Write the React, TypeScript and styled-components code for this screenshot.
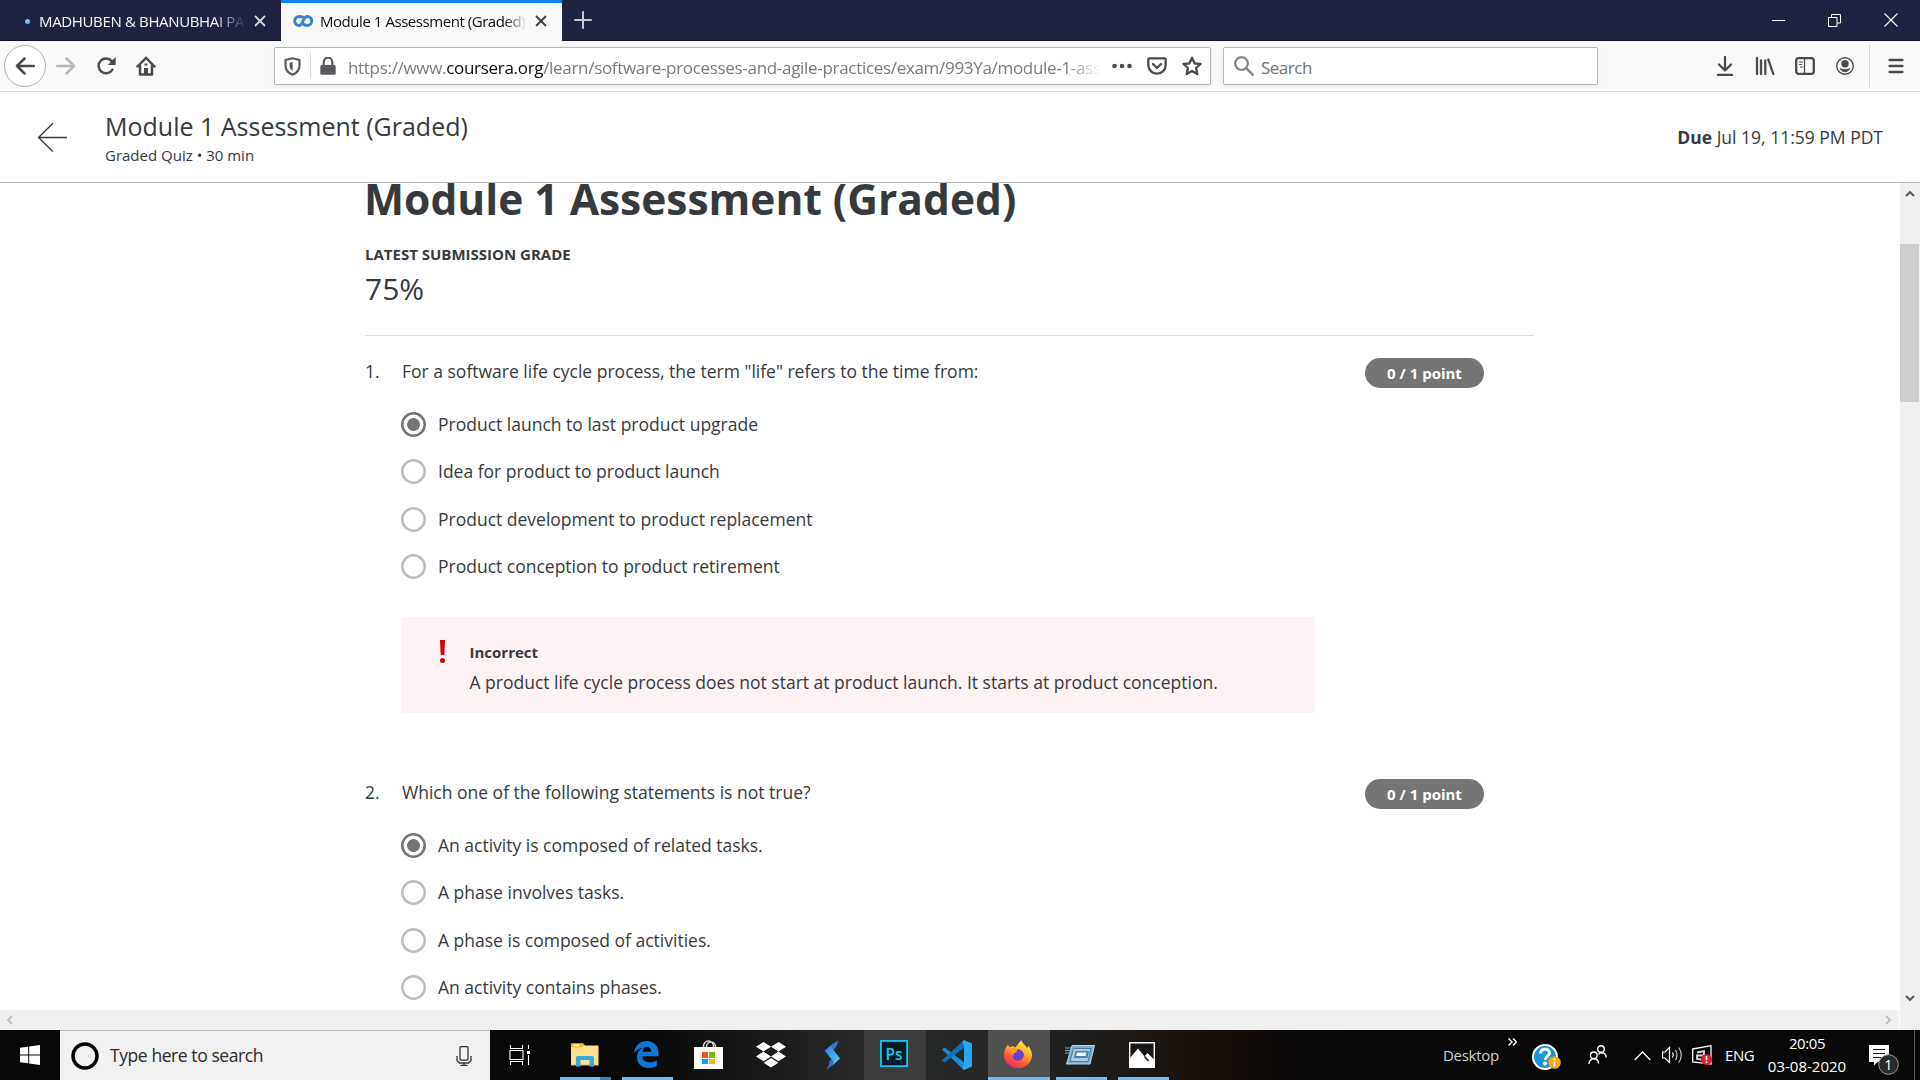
import React from "react";
import styled, { createGlobalStyle } from "styled-components";

const Global = createGlobalStyle`
  *{box-sizing:border-box}
  body{margin:0;background:#fff;overflow:hidden}
  svg{display:block;flex:none}
`;

const Screen = styled.div`
  width:1920px;height:1080px;display:flex;flex-direction:column;overflow:hidden;
  font-family:"Open Sans","Noto Sans",sans-serif;color:#373a3c;background:#fff;
`;
const Txt = styled.span<{ $size?: number; $ls?: number; $bold?: boolean; $color?: string }>`
  font-size:${p => p.$size ?? 17.5}px;letter-spacing:${p => p.$ls ?? 0}px;
  font-weight:${p => (p.$bold ? 700 : 400)};color:${p => p.$color ?? "inherit"};white-space:nowrap;
`;

/* ---------- browser chrome ---------- */
const TabBar = styled.div`height:41px;flex:none;display:flex;background:#202340;border-bottom:1px solid #12142b;`;
const Tab = styled.div<{ $active?: boolean }>`
  width:281px;height:41px;flex:none;display:flex;align-items:center;
  padding:1px 15px 0 ${p => (p.$active ? 12 : 25)}px;
  background:${p => (p.$active ? "#f9f9fa" : "transparent")};
  color:${p => (p.$active ? "#0c0c0d" : "#f9f9fa")};
  box-shadow:${p => (p.$active ? "inset 0 3px 0 #0a84ff" : "none")};
`;
const Loading = styled.i`width:5px;height:5px;border-radius:50%;background:#75bfff;margin-right:9px;flex:none;`;
const CourseraMark = styled.svg`margin-right:7px;`;
const TabLabel = styled.div<{ $w: number; $fade: number }>`
  width:${p => p.$w}px;margin-right:8px;flex:none;padding-bottom:1px;
  mask-image:linear-gradient(to left,transparent,#000 ${p => p.$fade}px);
`;
const NewTab = styled.div`width:42px;display:flex;align-items:center;justify-content:center;`;
const WinButtons = styled.div`margin-left:auto;display:flex;align-items:center;gap:43px;padding-right:22px;`;

const Toolbar = styled.div`
  height:51px;flex:none;display:flex;align-items:center;background:#f9f9fa;border-bottom:1px solid #dadada;padding-left:4px;
`;
const BackButton = styled.div`
  width:42px;height:42px;border-radius:50%;border:1px solid #b1b1b3;background:#fff;display:flex;align-items:center;justify-content:center;
`;
const NavIcons = styled.div`display:flex;align-items:center;gap:20px;padding-left:10px;width:228px;`;
const Field = styled.div<{ $w: number; $pad: number; $ml?: number }>`
  width:${p => p.$w}px;height:38px;margin-left:${p => p.$ml ?? 0}px;padding-left:${p => p.$pad}px;flex:none;display:flex;align-items:center;
  background:#fff;border:1px solid #b8b8b9;border-radius:2px;box-shadow:0 1px 4px rgba(0,0,0,.08);
`;
const Divider = styled.i<{ $h: number; $ml?: number; $mr?: number }>`
  width:1px;height:${p => p.$h}px;background:#d7d7db;margin:0 ${p => p.$mr ?? 0}px 0 ${p => p.$ml ?? 0}px;
`;
const Url = styled.div`
  width:753px;margin-left:12px;margin-right:11px;white-space:nowrap;padding-top:2px;
  mask-image:linear-gradient(to left,transparent,#000 34px);
`;
const UrlActions = styled.div`display:flex;align-items:center;gap:15px;`;
const SearchLabel = styled.div`margin-left:7px;padding-top:2px;`;
const RightIcons = styled.div`display:flex;align-items:center;gap:20px;margin-left:117px;`;

/* ---------- page ---------- */
const PageHeader = styled.header`
  height:91px;flex:none;display:flex;align-items:center;padding:0 37px;border-bottom:1px solid #bdbdbd;background:#fff;
`;
const HeaderTitles = styled.div`display:flex;flex-direction:column;margin-left:37px;`;
const HeadLine = styled.div<{ $lh: number }>`line-height:${p => p.$lh}px;`;
const Due = styled.div`margin-left:auto;line-height:26px;`;

const Viewport = styled.div`height:827px;flex:none;display:flex;overflow:hidden;`;
const Main = styled.main`flex:1;min-width:0;overflow:hidden;padding-left:365px;`;
const Heading = styled.h1`
  margin:-16px 0 0 -1px;font-size:42.5px;line-height:64px;font-weight:700;white-space:nowrap;color:#373a3c;
`;
const GradeLabel = styled.div`margin-top:11px;line-height:24px;`;
const Grade = styled.div`line-height:42px;margin-top:2px;`;
const Rule = styled.hr`width:1169px;height:1px;border:0;background:#dcdcdc;margin:20px 0 22px;`;
const Question = styled.section`width:1119px;display:grid;grid-template-columns:37px 1fr 119px;height:421px;align-content:start;`;
const Cell = styled.div`line-height:26px;`;
const Points = styled.div`
  width:119px;height:30px;border-radius:15px;background:#757575;display:flex;align-items:center;justify-content:center;
`;
const Answers = styled.div`grid-column:2 / 4;padding-top:12px;`;
const Option = styled.label`height:47.5px;display:flex;align-items:center;gap:12px;margin-left:-1px;`;
const Radio = styled.i<{ $on: boolean }>`
  width:25px;height:25px;flex:none;border-radius:50%;margin-top:1px;
  box-shadow:inset 0 0 0 2.5px ${p => (p.$on ? "#757575" : "#bdbdbd")};
  background:${p => (p.$on ? "radial-gradient(circle,#757575 0 6px,#fff 6.8px)" : "#fff")};
`;
const Feedback = styled.div`
  width:913px;height:96px;margin-top:27px;background:#fdf3f4;display:flex;padding:23px 0 0 37px;
`;
const FeedbackBody = styled.div`margin-left:23.500px;display:flex;flex-direction:column;`;
const FeedbackLine = styled.div<{ $lh: number }>`line-height:${p => p.$lh}px;`;

const VScroll = styled.div`width:20px;background:#f0f0f0;display:flex;flex-direction:column;padding-bottom:1px;`;
const VTrack = styled.div`flex:1;padding-top:40px;`;
const Thumb = styled.div`width:19px;height:158px;background:#cdcdcd;`;
const ScrollBtn = styled.div`height:21px;width:19px;display:flex;align-items:center;justify-content:center;`;
const HScroll = styled.div`
  height:20px;flex:none;background:linear-gradient(90deg,#f0f0f0 1899px,#fff 1899px 1900px,#f0f0f0 1900px);
  display:flex;align-items:center;justify-content:space-between;padding:0 28px 0 6px;
`;

/* ---------- taskbar ---------- */
const Bar = styled.div`
  height:50px;flex:none;display:flex;color:#fff;
  background:linear-gradient(90deg,#080808 0,#080808 640px,#1a1a19 770px,#282a29 860px,#252726 990px,#1f1e1c 1090px,#190f0a 1200px,#0a0808 1300px,#080808 1400px);
`;
const Start = styled.div`width:60px;display:flex;align-items:center;justify-content:center;`;
const SearchBox = styled.div`
  width:430px;background:#f1f1f1;border-top:1px solid #b9b9b9;display:flex;align-items:center;padding:0 18px 0 11px;color:#2b2b2b;
`;
const SearchText = styled.div`margin-left:11px;flex:1;padding-bottom:1px;`;
const Apps = styled.div`display:flex;`;
const AppTile = styled.div<{ $bg?: string; $w?: number }>`
  width:${p => p.$w ?? 62}px;height:50px;display:flex;flex-direction:column;align-items:center;background:${p => p.$bg ?? "transparent"};
`;
const IconSlot = styled.div<{ $pt?: number; $pr?: number }>`
  flex:1;display:flex;align-items:center;padding:${p => p.$pt ?? 2}px ${p => p.$pr ?? 1}px 0 0;
`;
const Underline = styled.i<{ $w: number; $split?: boolean }>`
  width:${p => p.$w}px;height:3px;background:${p => (p.$split ? "linear-gradient(90deg,#76b9ed 40px,#4d7fa8 40px)" : "#76b9ed")};
`;
const Tray = styled.div`margin-left:auto;display:flex;align-items:center;height:50px;`;
const TrayItem = styled.div<{ $w: number; $pt?: number }>`
  width:${p => p.$w}px;padding-top:${p => p.$pt ?? 0}px;display:flex;align-items:center;flex:none;
`;
const Overflow = styled.div`width:24px;height:50px;padding-top:8px;flex:none;`;
const Clock = styled.div`width:94px;display:flex;flex-direction:column;align-items:center;line-height:23px;flex:none;`;
const ActionCenter = styled.div`width:45px;margin-left:15px;padding-top:10px;height:50px;flex:none;`;
const ShowDesktop = styled.i`width:6px;height:50px;border-left:1px solid #5a5a5a;`;

const G = "#4a4a4f";
const Close = ({ c }: { c: string }) => (
  <svg width="12" height="12" viewBox="0 0 12 12"><path d="M1 1l10 10M11 1L1 11" stroke={c} strokeWidth="1.8" /></svg>
);

const QuestionHead = ({ n, text }: { n: string; text: string }) => (
  <>
    <Cell><Txt>{n}</Txt></Cell>
    <Cell><Txt>{text}</Txt></Cell>
    <Points><Txt $size={15} $bold $color="#fff">0 / 1 point</Txt></Points>
  </>
);

const OptionList = ({ options }: { options: string[] }) => (
  <>
    {options.map((t, i) => (
      <Option key={t}><Radio $on={i === 0} /><Txt>{t}</Txt></Option>
    ))}
  </>
);

const q1 = [
  "Product launch to last product upgrade",
  "Idea for product to product launch",
  "Product development to product replacement",
  "Product conception to product retirement",
];
const q2 = [
  "An activity is composed of related tasks.",
  "A phase involves tasks.",
  "A phase is composed of activities.",
  "An activity contains phases.",
];

const BrowserTabs = () => (
  <TabBar>
    <Tab>
      <Loading />
      <TabLabel $w={207} $fade={32}><Txt $size={15} $ls={-0.35}>MADHUBEN &amp; BHANUBHAI PA</Txt></TabLabel>
      <Close c="#d4d4da" />
    </Tab>
    <Tab $active>
      <CourseraMark width="20" height="12" viewBox="0 0 20 12">
        <path d="M11.5 3.2C10.2 1.8 8.4 1.5 6.2 1.5a4.5 4.5 0 0 0 0 9C10 10.500 10 1.500 14.200 1.500a4.500 4.500 0 0 1 0 9c-2 0-3.400-.6-4.500-2" fill="none" stroke="#3a82cf" strokeWidth="3" />
      </CourseraMark>
      <TabLabel $w={207} $fade={22}><Txt $size={15} $ls={-0.45}>Module 1 Assessment (Graded)</Txt></TabLabel>
      <Close c="#3a3a3d" />
    </Tab>
    <NewTab><svg width="18" height="18" viewBox="0 0 18 18"><path d="M9 1v16M1 9h16" stroke="#c9c9d0" strokeWidth="2" strokeLinecap="round" /></svg></NewTab>
    <WinButtons>
      <svg width="13" height="13" viewBox="0 0 13 13"><path d="M0 6.500h13" stroke="#fff" /></svg>
      <svg width="13" height="13" viewBox="0 0 13 13"><path d="M.5 3.500h8.500v9H.5zM3.500 3.500v-3h9v8.500H9" fill="none" stroke="#fff" /></svg>
      <svg width="14" height="14" viewBox="0 0 14 14"><path d="M.5 .5l13 13M13.500 .5l-13 13" stroke="#fff" strokeWidth="1.100" /></svg>
    </WinButtons>
  </TabBar>
);

const BrowserToolbar = () => (
  <Toolbar>
    <BackButton><svg width="20" height="20" viewBox="0 0 20 20"><path d="M18.800 10H2M9.500 2.500L2 10l7.500 7.500" fill="none" stroke={G} strokeWidth="2.500" strokeLinecap="round" strokeLinejoin="round" /></svg></BackButton>
    <NavIcons>
      <svg width="20" height="20" viewBox="0 0 20 20"><path d="M1.200 10H18M10.500 2.500L18 10l-7.500 7.500" fill="none" stroke="#b8b8ba" strokeWidth="2.500" strokeLinecap="round" strokeLinejoin="round" /></svg>
      <svg width="20" height="20" viewBox="0 0 20 20"><path d="M16.500 13.500A7.400 7.400 0 1 1 16 5.500" fill="none" stroke={G} strokeWidth="2.500" strokeLinecap="round" /><path d="M19.700 1v7.200a.8.8 0 0 1-.8.8H11.700z" fill={G} /></svg>
      <svg width="20" height="20" viewBox="0 0 20 20"><path d="M1.500 10.500L10 1.800l8.500 8.700M4 9.500v9h12v-9" fill="none" stroke={G} strokeWidth="2.500" strokeLinecap="round" strokeLinejoin="round" /><path d="M8 18v-6h4v6M8.500 7.500h3v2h-3z" fill={G} /></svg>
    </NavIcons>
    <Field $w={937} $pad={9}>
      <svg width="17" height="19" viewBox="0 0 17 19"><path d="M8.500 1.300L15.500 3v5.500c0 4.500-3 7.600-7 9.200-4-1.600-7-4.700-7-9.200V3z" fill="none" stroke="#5b5b5f" strokeWidth="2.200" strokeLinejoin="round" /><path d="M8.700 5v9c-2.300-1.500-3.200-3.200-3.200-5.500V5.700z" fill="#5b5b5f" /></svg>
      <Divider $h={26} $ml={9} $mr={9} />
      <svg width="16" height="18" viewBox="0 0 16 18"><rect x=".3" y="8" width="15.400" height="9.700" rx="1.500" fill="#5b5b5f" /><path d="M3.700 9V5a4.300 4.300 0 0 1 8.600 0v4" fill="none" stroke="#5b5b5f" strokeWidth="2.200" /></svg>
      <Url><Txt $size={17} $ls={-0.31} $color="#7b7b7e">https://www.<Txt $size={17} $ls={-0.31} $color="#0c0c0d">coursera.org</Txt>/learn/software-processes-and-agile-practices/exam/993Ya/module-1-ass</Txt></Url>
      <UrlActions>
        <svg width="20" height="6" viewBox="0 0 20 6"><circle cx="2.500" cy="3" r="2.300" fill={G} /><circle cx="10" cy="3" r="2.300" fill={G} /><circle cx="17.500" cy="3" r="2.300" fill={G} /></svg>
        <svg width="20" height="18" viewBox="0 0 20 18"><path d="M2.500 1.300h15a1.200 1.200 0 0 1 1.200 1.200V8a8.700 8.700 0 0 1-17.400 0V2.500a1.200 1.200 0 0 1 1.200-1.200z" fill="none" stroke={G} strokeWidth="2.300" /><path d="M6 7l4 4 4-4" fill="none" stroke={G} strokeWidth="2.300" strokeLinecap="round" strokeLinejoin="round" /></svg>
        <svg width="20" height="20" viewBox="0 0 20 20"><path d="M10 1.800l2.500 5.500 6 .7-4.400 4 1.200 6L10 15l-5.300 3 1.200-6L1.500 8l6-.7z" fill="none" stroke={G} strokeWidth="2.300" strokeLinejoin="round" /></svg>
      </UrlActions>
    </Field>
    <Field $w={375} $pad={10} $ml={12}>
      <svg width="20" height="20" viewBox="0 0 20 20"><circle cx="7.500" cy="7.500" r="6.300" fill="none" stroke="#87878a" strokeWidth="2.300" /><path d="M12.200 12.200l6.500 6.500" stroke="#87878a" strokeWidth="2.600" strokeLinecap="round" /></svg>
      <SearchLabel><Txt $size={17} $ls={-0.5} $color="#737375">Search</Txt></SearchLabel>
    </Field>
    <RightIcons>
      <svg width="20" height="20" viewBox="0 0 20 20"><path d="M10 1v13M4 8.500l6 6 6-6M3 19h14" fill="none" stroke={G} strokeWidth="2.300" strokeLinecap="round" strokeLinejoin="round" /></svg>
      <svg width="20" height="20" viewBox="0 0 20 20"><path d="M2 2v16M6 4.500V18M10.300 4.500V18M13.300 3.500l5 14.500" fill="none" stroke={G} strokeWidth="2.300" strokeLinecap="round" /></svg>
      <svg width="20" height="20" viewBox="0 0 20 20"><rect x="1.200" y="2.200" width="17.600" height="15.600" rx="2.500" fill="none" stroke={G} strokeWidth="2.300" /><path d="M9.500 2v16" stroke={G} strokeWidth="1.300" /><path d="M4 6h4M4 8.500h3M5 11h3" stroke={G} strokeWidth="1.200" /></svg>
      <svg width="20" height="20" viewBox="0 0 20 20"><circle cx="10" cy="10" r="8.300" fill="none" stroke={G} strokeWidth="1.400" /><circle cx="10" cy="7.700" r="3.700" fill={G} /><path d="M5 12.600c1.800 1.200 8.200 1.200 10 0a5.600 5.600 0 0 1-10 0z" fill={G} stroke={G} strokeWidth=".8" /></svg>
    </RightIcons>
    <Divider $h={42} $ml={14} $mr={18} />
    <svg width="16" height="16" viewBox="0 0 16 16"><path d="M1.500 2h13M1.500 8h13M1.500 14h13" stroke={G} strokeWidth="2.300" strokeLinecap="round" /></svg>
  </Toolbar>
);

const WindowsTaskbar = () => (
  <Bar>
    <Start><svg width="20" height="20" viewBox="0 0 20 20"><path d="M0 2.800L8.200 1.700v7.800H0zM9.200 1.500L20 0v9.500H9.200zM0 10.500h8.200v7.800L0 17.200zM9.200 10.500H20V20L9.200 18.500z" fill="#fff" /></svg></Start>
    <SearchBox>
      <svg width="28" height="28" viewBox="0 0 28 28"><circle cx="14" cy="14" r="12" fill="none" stroke="#000" strokeWidth="3.400" /></svg>
      <SearchText><Txt $ls={-0.42}>Type here to search</Txt></SearchText>
      <svg width="16" height="20" viewBox="0 0 16 20"><rect x="4" y=".7" width="8" height="13.500" rx="1" fill="none" stroke="#333" strokeWidth="1.300" /><path d="M1 10v4.500l2.500 2.500h9L15 14.500V10M8 17v2.300M4.500 19.300h7" fill="none" stroke="#333" strokeWidth="1.300" /></svg>
    </SearchBox>
    <Apps>
      <AppTile $w={64}><IconSlot $pr={4}><svg width="22" height="20" viewBox="0 0 22 20"><path d="M1.500 0v3.500h12V0M1.500 20v-3.500h12V20M1 5.500h13v9H1zM19.500 0v4M19.500 10v10" fill="none" stroke="#fff" strokeWidth="1.100" /><path d="M18 6h3v3h-3z" fill="#fff" /></svg></IconSlot><Underline $w={0} /></AppTile>
      <AppTile><IconSlot><svg width="28" height="24" viewBox="0 0 28 24"><path d="M0 1.500a1 1 0 0 1 1-1h11l2 2h13.500V22H0z" fill="#ffe08a" /><path d="M0 .5h12l1.500 2L11 4.500H0z" fill="#f5b92b" /><path d="M2.500 1.500h6v1.700h-6z" fill="#fff" /><path d="M0 22h28" stroke="#e2b95c" /><path d="M5 23.500v-9a1.500 1.500 0 0 1 1.500-1.500h15a1.500 1.500 0 0 1 1.500 1.500v9h-4.500V17h-9v6.500z" fill="#35abe2" /></svg></IconSlot><Underline $w={51} $split /></AppTile>
      <AppTile><IconSlot $pr={2}><svg width="25" height="27" viewBox="0 0 25 27"><path d="M0 12.200C.8 5.200 5.500 0 12.700 0 20 0 24.500 5 24.500 12v3.300H8.200c.2 4.300 4 6.200 7.800 6.200 2.600 0 4.700-.7 6.800-1.900v5.500C20.500 26.300 18 27 14.700 27 8 27 3 22.800 3 16.500c0-4.300 2.200-7.800 6.200-9.700C5 7.200 1.800 9.500 0 12.200zM8.400 10.700H17c0-3-1.500-4.900-4.200-4.900-2.500 0-4 2-4.400 4.900z" fill="#0a78d7" /></svg></IconSlot><Underline $w={51} /></AppTile>
      <AppTile><IconSlot><svg width="29" height="29" viewBox="0 0 29 29"><path d="M9.500 8V6a5 5 0 0 1 10 0v2M12.500 8V6.500a4.500 4.500 0 0 1 9 0V8" fill="none" stroke="#d8d8d8" strokeWidth="1.400" /><path d="M0 7h29v22H0z" fill="#fff" /><path d="M8 12h6v6H8z" fill="#f25022" /><path d="M15 12h6v6h-6z" fill="#7fba00" /><path d="M8 19h6v5H8z" fill="#00a4ef" /><path d="M15 19h6v5h-6z" fill="#ffb900" /></svg></IconSlot><Underline $w={0} /></AppTile>
      <AppTile><IconSlot><svg width="30" height="26" viewBox="0 0 30 26"><path d="M7.500 0L15 4.800 7.500 9.600 0 4.800zM22.500 0L30 4.800l-7.500 4.800L15 4.800zM7.500 9.600l7.500 4.800-7.500 4.800L0 14.400zM22.500 9.600l7.500 4.800-7.500 4.800-7.500-4.800zM15 16l7.300 4.700L15 25.400l-7.300-4.700z" fill="#fff" /></svg></IconSlot><Underline $w={0} /></AppTile>
      <AppTile><IconSlot $pr={2}><svg width="17" height="30" viewBox="0 0 17 30"><defs><linearGradient id="st" x1="0" y1="0" x2="1" y2="1"><stop offset="0" stopColor="#2d74d8" /><stop offset=".5" stopColor="#41a5f2" /><stop offset="1" stopColor="#47e0e8" /></linearGradient></defs><path d="M14.500 .3L7 5l2.500 5 3-3.500zM2 30l7-5 .5-4.500L6 19.500l-1 5z" fill="#3a6fc0" /><path d="M.7 10.700L7 5l2.500 4.800L16 18.500 9 25l.3-3.500z" fill="url(#st)" /></svg></IconSlot><Underline $w={0} /></AppTile>
      <AppTile $bg="#3b3d3c"><IconSlot $pt={1} $pr={2}><svg width="28" height="28" viewBox="0 0 28 28"><rect x=".9" y=".9" width="26.200" height="25.200" fill="#031d26" stroke="#1cc4f0" strokeWidth="1.800" /><text x="5.500" y="19.500" fontSize="16.500" fontFamily="Open Sans, sans-serif" fontWeight="600" textLength="17" lengthAdjust="spacingAndGlyphs" fill="#25c5f2">Ps</text></svg></IconSlot><Underline $w={0} /></AppTile>
      <AppTile><IconSlot><svg width="30" height="30" viewBox="0 0 30 30"><path d="M0 9.500L2.500 7.500 25 24.500 22 30z" fill="#1b8ad3" /><path d="M0 20.500l2.500 2L25 5.500 22 0z" fill="#0f6fb8" /><path d="M22 0l8 3.500v23L22 30l-1.500-1.500L22 22V8l-1.500-6.500z" fill="#2ba4f1" /></svg></IconSlot><Underline $w={0} /></AppTile>
      <AppTile $bg="#4f5150"><IconSlot $pt={1} $pr={2}><svg width="28" height="28" viewBox="0 0 28 28"><defs><linearGradient id="fx" x1=".8" y1="0" x2=".3" y2="1"><stop offset="0" stopColor="#fff04a" /><stop offset=".4" stopColor="#ffb22e" /><stop offset=".7" stopColor="#ff5a36" /><stop offset="1" stopColor="#f0206a" /></linearGradient></defs><path d="M4 4.500c.4 1.400 1 2 2 2.600L9.300 6 11 7.500C13 6.500 14 3 17.500 0c.5 3.500 4 5 5.500 8l1.500-2c2 3 3.500 5.500 3.500 9.500A14 13 0 0 1 0 15c0-4 1.500-8 4-10.500z" fill="url(#fx)" /><circle cx="14" cy="15" r="5.800" fill="#6a40d4" /><path d="M7.500 8.500c2-1 4.500-.5 6 1.500l-1.500 2.500c-2 0-3 1.500-2.500 3.500-2-1-2.800-4.500-2-7.500z" fill="#ff9a2c" /></svg></IconSlot><Underline $w={62} /></AppTile>
      <AppTile><IconSlot $pr={2}><svg width="30" height="20" viewBox="0 0 30 20"><path d="M7 .5h22.500L25 19H1.500z" fill="#79b2dc" stroke="#b9d4ea" /><path d="M8.500 3.500h17.500l-3 13H5z" fill="#a9cbe6" stroke="#52799a" /><path d="M10.500 6h13.500L22.500 13H9z" fill="#4f7fab" /><path d="M12 7.500h9.500l-1 3.500H11z" fill="#eef5fb" /><path d="M0 3h6M0 5.500h5.500M0 8h5" stroke="#6fa6cf" /></svg></IconSlot><Underline $w={51} /></AppTile>
      <AppTile><IconSlot $pr={2}><svg width="26" height="26" viewBox="0 0 26 26"><path d="M.7 .7h24.600v24.600H.7z" fill="#181716" stroke="#fff" strokeWidth="1.400" /><path d="M1 16l8-9.500 6.500 8 3-3.500 6.500 6.500V25H1z" fill="#fff" /><path d="M15.500 14.500l4 4.500" stroke="#181716" strokeWidth="1.600" /></svg></IconSlot><Underline $w={51} /></AppTile>
    </Apps>
    <Tray>
      <TrayItem $w={65}><Txt $size={15} $ls={-0.3} $color="#d0d0d0">Desktop</Txt></TrayItem>
      <Overflow><svg width="9" height="8" viewBox="0 0 9 8"><path d="M.5 0.500L4 4 .5 7.500M5 .5L8.500 4 5 7.500" fill="none" stroke="#fff" strokeWidth="1.400" /></svg></Overflow>
      <TrayItem $w={56} $pt={3}><svg width="29" height="28" viewBox="0 0 29 28"><circle cx="13" cy="14" r="12" fill="#1795d4" stroke="#fff" strokeWidth="2" /><path d="M8.500 10.500C8.500 4.500 17.500 5 17.500 10c0 3-4.300 3.200-4.300 7" fill="none" stroke="#fff" strokeWidth="3" /><circle cx="13" cy="20.500" r="2" fill="#fff" /><circle cx="22.500" cy="19.500" r="6.300" fill="#f5a81c" /><path d="M22.500 18.500v5M22.500 15.500v1.700" stroke="#fff" strokeWidth="1.800" /></svg></TrayItem>
      <TrayItem $w={46}><svg width="19" height="20" viewBox="0 0 19 20"><g fill="none" stroke="#fff" strokeWidth="1.400"><circle cx="13" cy="4" r="3.300" /><circle cx="5.800" cy="10.300" r="3.300" /><path d="M1 19c0-3 2-5.300 4.800-5.300S10.300 16 10.600 18.500M10.500 9.500c1-1.300 1.500-1.700 2.700-1.700 2.800 0 4.800 2 5 4.700" /></g></svg></TrayItem>
      <TrayItem $w={28} $pt={1}><svg width="17" height="10" viewBox="0 0 17 10"><path d="M.7 9L8.500 1l7.800 8" fill="none" stroke="#fff" strokeWidth="1.300" /></svg></TrayItem>
      <TrayItem $w={30}><svg width="21" height="18" viewBox="0 0 21 18"><g fill="none" stroke="#fff" strokeWidth="1.200"><path d="M.6 6v6H3l4.500 4.500V1.500L3 6z" /><path d="M10.500 6.500q1.500 2.500 0 5" /><path d="M13.500 4q3 5 0 10" opacity=".8" /><path d="M16.800 1.500q5 7.500 0 15" opacity=".75" /></g></svg></TrayItem>
      <TrayItem $w={33}><svg width="20" height="20" viewBox="0 0 20 20"><path d="M.7 4L19 .7V19L.7 17z" fill="none" stroke="#fff" strokeWidth="1.300" /><path d="M5 7.500l7-1.500v9l-7-1v-3.500h7" fill="none" stroke="#ddd" strokeWidth="1.800" /><circle cx="14.500" cy="14.500" r="5.500" fill="#dc1f2e" /><path d="M14.500 11v4.300M14.500 16.500V18" stroke="#fff" strokeWidth="1.600" /></svg></TrayItem>
      <TrayItem $w={35}><Txt $size={15} $ls={-0.4}>ENG</Txt></TrayItem>
      <Clock><Txt $size={15} $ls={-0.4}>20:05</Txt><Txt $size={15}>03-08-2020</Txt></Clock>
      <ActionCenter><svg width="31" height="36" viewBox="0 0 31 36"><path d="M0 5h20v17H8.500L5 25.500V22H0z" fill="#fff" /><path d="M4 9.500h12M4 13.500h12M4 17.500h8" stroke="#111" strokeWidth="1.200" /><circle cx="19.500" cy="24.500" r="9.800" fill="#2b2b2b" stroke="#9a9a9a" /><text x="19.500" y="29.700" fontSize="14.500" textAnchor="middle" fontFamily="Open Sans, sans-serif" fill="#fff">1</text></svg></ActionCenter>
      <ShowDesktop />
    </Tray>
  </Bar>
);

export default function App() {
  return (
    <Screen>
      <Global />
      <BrowserTabs />
      <BrowserToolbar />
      <PageHeader>
        <svg width="31" height="30" viewBox="0 0 31 30"><path d="M30 15.500H1.200M16 1.200L1.500 15.500 16 29.700" fill="none" stroke="#373a3c" strokeWidth="1.300" /></svg>
        <HeaderTitles>
          <HeadLine $lh={31}><Txt $size={25}>Module 1 Assessment (Graded)</Txt></HeadLine>
          <HeadLine $lh={18}><Txt $size={15}>Graded Quiz • 30 min</Txt></HeadLine>
        </HeaderTitles>
        <Due><Txt $bold>Due</Txt><Txt> Jul 19, 11:59 PM PDT</Txt></Due>
      </PageHeader>
      <Viewport>
        <Main>
          <Heading>Module 1 Assessment (Graded)</Heading>
          <GradeLabel><Txt $size={15} $bold>LATEST SUBMISSION GRADE</Txt></GradeLabel>
          <Grade><Txt $size={30}>75%</Txt></Grade>
          <Rule />
          <Question>
            <QuestionHead n="1." text={'For a software life cycle process, the term "life" refers to the time from:'} />
            <Answers>
              <OptionList options={q1} />
              <Feedback>
                <svg width="7" height="24" viewBox="0 0 7 24"><path d="M1 0h5l-.7 15H1.700z" fill="#d30001" /><circle cx="3.500" cy="20.500" r="2.500" fill="#d30001" /></svg>
                <FeedbackBody>
                  <FeedbackLine $lh={24}><Txt $size={15} $bold>Incorrect</Txt></FeedbackLine>
                  <FeedbackLine $lh={36}><Txt>A product life cycle process does not start at product launch. It starts at product conception.</Txt></FeedbackLine>
                </FeedbackBody>
              </Feedback>
            </Answers>
          </Question>
          <Question>
            <QuestionHead n="2." text="Which one of the following statements is not true?" />
            <Answers><OptionList options={q2} /></Answers>
          </Question>
        </Main>
        <VScroll>
          <ScrollBtn><svg width="10" height="7" viewBox="0 0 10 7"><path d="M1 6l4-4 4 4" fill="none" stroke="#505050" strokeWidth="1.800" /></svg></ScrollBtn>
          <VTrack><Thumb /></VTrack>
          <ScrollBtn><svg width="10" height="7" viewBox="0 0 10 7"><path d="M1 1l4 4 4-4" fill="none" stroke="#505050" strokeWidth="1.800" /></svg></ScrollBtn>
        </VScroll>
      </Viewport>
      <HScroll>
        <svg width="7" height="10" viewBox="0 0 7 10"><path d="M6 1L2 5l4 4" fill="none" stroke="#bcbcbc" strokeWidth="1.800" /></svg>
        <svg width="7" height="10" viewBox="0 0 7 10"><path d="M1 1l4 4-4 4" fill="none" stroke="#bcbcbc" strokeWidth="1.800" /></svg>
      </HScroll>
      <WindowsTaskbar />
    </Screen>
  );
}
